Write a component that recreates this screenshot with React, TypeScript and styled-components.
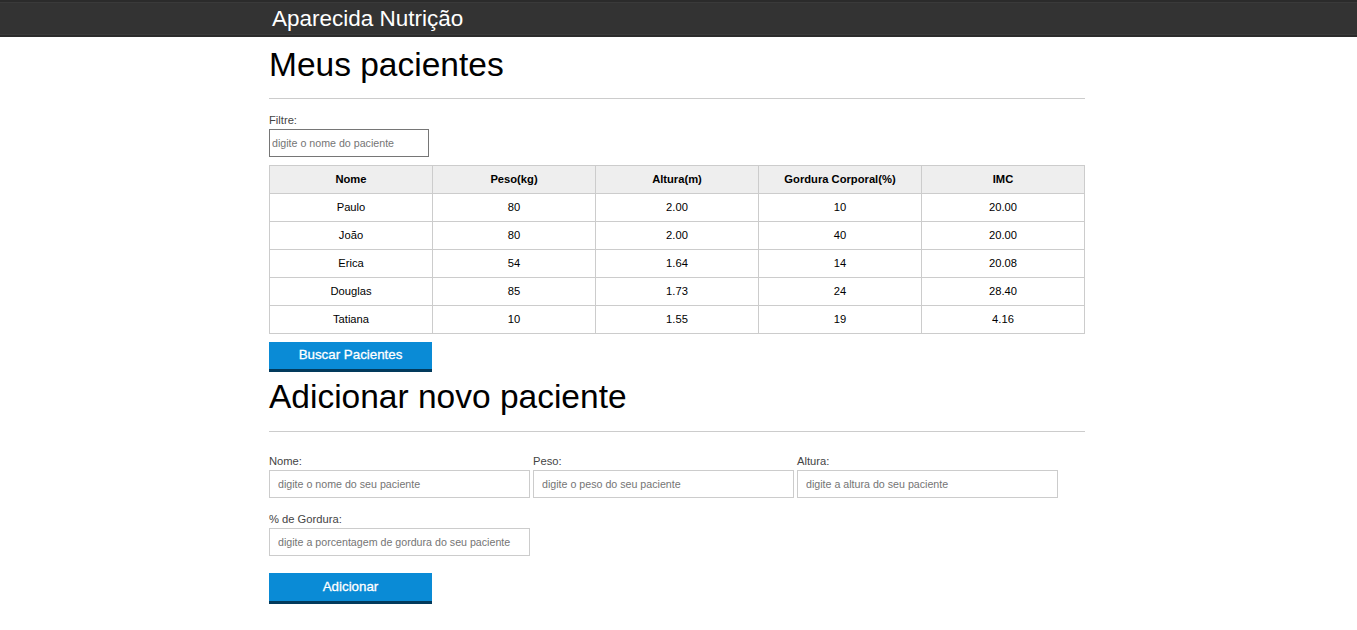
import React from "react";
import styled, { createGlobalStyle } from "styled-components";

const Global = createGlobalStyle`
  html, body { margin: 0; padding: 0; background: #fff; }
  body { font-family: "Liberation Sans", Arial, sans-serif; color: #000; }
  * { box-sizing: border-box; }
`;

const Header = styled.header`
  height: 37px;
  background: #333;
  box-shadow: inset 0 2px 0 #2b2b2b, inset 0 3px 0 #3a3a3a, inset 0 -2px 0 #2b2b2b, inset 0 -3px 0 #3a3a3a;
`;

const Container = styled.div`
  width: 816px;
  margin: 0 0 0 269px;
`;

const Brand = styled.h1`
  margin: 0;
  padding-left: 3px;
  font-size: 22.5px;
  font-weight: normal;
  line-height: 37px;
  color: #fff;
`;

const Title = styled.h2<{ $top: number }>`
  margin: ${(p) => p.$top}px 0 0;
  font-size: 33.5px;
  font-weight: normal;
  line-height: 40px;
  color: #000;
`;

const Rule = styled.hr<{ $top: number }>`
  margin: ${(p) => p.$top}px 0 0;
  border: 0;
  border-top: 1px solid #ccc;
  height: 0;
`;

const Label = styled.label`
  display: block;
  font-size: 11.2px;
  line-height: 13px;
  color: #444;
  margin-bottom: 2px;
`;

const FilterBlock = styled.div`
  margin-top: 15px;
`;

const FilterInput = styled.input`
  display: block;
  width: 160px;
  height: 28px;
  padding: 1px 2px;
  border: 1px solid #767676;
  font-family: "Liberation Sans", Arial, sans-serif;
  font-size: 10.67px;
  &::placeholder { color: #757575; }
`;

const Table = styled.table`
  margin-top: 8px;
  width: 100%;
  border-collapse: collapse;
  table-layout: fixed;
  font-size: 11.2px;
`;

const Th = styled.th`
  height: 28px;
  background: #eee;
  border: 1px solid #ccc;
  font-weight: bold;
  text-align: center;
  padding: 0 0 1px;
`;

const Td = styled.td`
  height: 28px;
  border: 1px solid #ccc;
  text-align: center;
  padding: 0 0 1px;
`;

const Button = styled.button<{ $top: number; $h: number }>`
  display: block;
  margin-top: ${(p) => p.$top}px;
  width: 163px;
  height: ${(p) => p.$h}px;
  padding: 0 0 2px;
  border: 0;
  border-bottom: 3px solid #023a5c;
  background: #0a8bd6;
  color: #fff;
  font-family: "Liberation Sans", Arial, sans-serif;
  font-size: 13.33px;
  font-weight: normal;
  -webkit-text-stroke: 0.3px #fff;
  cursor: pointer;
`;

const FormRow = styled.div<{ $top: number }>`
  display: flex;
  gap: 3px;
  margin-top: ${(p) => p.$top}px;
`;

const Field = styled.div`
  width: 261px;
`;

const FormInput = styled.input`
  display: block;
  width: 261px;
  height: 28px;
  padding: 0 8px;
  border: 1px solid #ccc;
  font-family: "Liberation Sans", Arial, sans-serif;
  font-size: 10.67px;
  &::placeholder { color: #757575; }
`;

const patients = [
  { nome: "Paulo", peso: "80", altura: "2.00", gordura: "10", imc: "20.00" },
  { nome: "João", peso: "80", altura: "2.00", gordura: "40", imc: "20.00" },
  { nome: "Erica", peso: "54", altura: "1.64", gordura: "14", imc: "20.08" },
  { nome: "Douglas", peso: "85", altura: "1.73", gordura: "24", imc: "28.40" },
  { nome: "Tatiana", peso: "10", altura: "1.55", gordura: "19", imc: "4.16" },
];

export default function App() {
  return (
    <>
      <Global />
      <Header>
        <Container>
          <Brand>Aparecida Nutrição</Brand>
        </Container>
      </Header>
      <Container>
        <Title $top={8}>Meus pacientes</Title>
        <Rule $top={13} />
        <FilterBlock>
          <Label htmlFor="filtro">Filtre:</Label>
          <FilterInput id="filtro" placeholder="digite o nome do paciente" />
        </FilterBlock>
        <Table>
          <thead>
            <tr>
              <Th>Nome</Th>
              <Th>Peso(kg)</Th>
              <Th>Altura(m)</Th>
              <Th>Gordura Corporal(%)</Th>
              <Th>IMC</Th>
            </tr>
          </thead>
          <tbody>
            {patients.map((p) => (
              <tr key={p.nome}>
                <Td>{p.nome}</Td>
                <Td>{p.peso}</Td>
                <Td>{p.altura}</Td>
                <Td>{p.gordura}</Td>
                <Td>{p.imc}</Td>
              </tr>
            ))}
          </tbody>
        </Table>
        <Button $top={8} $h={30}>Buscar Pacientes</Button>
        <Title $top={5}>Adicionar novo paciente</Title>
        <Rule $top={14} />
        <FormRow $top={23}>
          <Field>
            <Label>Nome:</Label>
            <FormInput placeholder="digite o nome do seu paciente" />
          </Field>
          <Field>
            <Label>Peso:</Label>
            <FormInput placeholder="digite o peso do seu paciente" />
          </Field>
          <Field>
            <Label>Altura:</Label>
            <FormInput placeholder="digite a altura do seu paciente" />
          </Field>
        </FormRow>
        <FormRow $top={15}>
          <Field>
            <Label>% de Gordura:</Label>
            <FormInput placeholder="digite a porcentagem de gordura do seu paciente" />
          </Field>
        </FormRow>
        <Button $top={17} $h={31}>Adicionar</Button>
      </Container>
    </>
  );
}
